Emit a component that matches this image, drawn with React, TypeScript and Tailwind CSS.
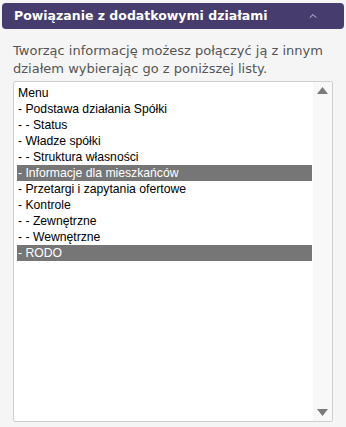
import { ChevronUp } from "lucide-react";

const items = [
  { label: "Menu", selected: false },
  { label: "- Podstawa działania Spółki", selected: false },
  { label: "- - Status", selected: false },
  { label: "- Władze spółki", selected: false },
  { label: "- - Struktura własności", selected: false },
  { label: "- Informacje dla mieszkańców", selected: true },
  { label: "- Przetargi i zapytania ofertowe", selected: false },
  { label: "- Kontrole", selected: false },
  { label: "- - Zewnętrzne", selected: false },
  { label: "- - Wewnętrzne", selected: false },
  { label: "- RODO", selected: true },
];

export default function App() {
  return (
    <div className="w-[346px] h-[427px] bg-[#f5f5f5] pt-[3px] px-[2px] font-['DejaVu_Sans',Verdana,sans-serif]">
      {/* Section header */}
      <div className="h-[26px] rounded-[4px] bg-[#463c6e] flex items-center justify-between pl-[12px] pr-[25px]">
        <span className="text-white font-bold text-[12.5px] leading-none">Powiązanie z dodatkowymi działami</span>
        <ChevronUp className="w-[12px] h-[12px] text-[#d0cde0]" strokeWidth={2} />
      </div>

      <div className="px-[11px] pt-[13px]">
        <p className="text-[13px] leading-[18px] text-[#555555]">
          Tworząc informację możesz połączyć ją z innym
          <br />
          działem wybierając go z poniższej listy.
        </p>

        {/* Multi-select list */}
        <div className="mt-[3px] w-[320px] h-[341px] bg-white border border-[#cfcfcf] rounded-[2px] flex">
          <div className="flex-1 pl-[3px] pr-[1px] pt-[3px] font-['Liberation_Sans',Arial,sans-serif] text-[12.2px]">
            {items.map((it) => (
              <div
                key={it.label}
                className={`h-[16px] leading-[16px] pl-[1px] whitespace-nowrap ${
                  it.selected ? "bg-[#767676] text-white" : "text-black"
                }`}
              >
                {it.label}
              </div>
            ))}
          </div>
          <div className="w-[19px] bg-[#f8f8f8] flex flex-col items-center justify-between pt-[5px] pb-[5px]">
            <svg width="11" height="7" viewBox="0 0 11 7">
              <path d="M5.5 0 L11 7 L0 7 Z" fill="#7a7a7a" />
            </svg>
            <svg width="11" height="7" viewBox="0 0 11 7">
              <path d="M0 0 L11 0 L5.5 7 Z" fill="#7a7a7a" />
            </svg>
          </div>
        </div>
      </div>
    </div>
  );
}
